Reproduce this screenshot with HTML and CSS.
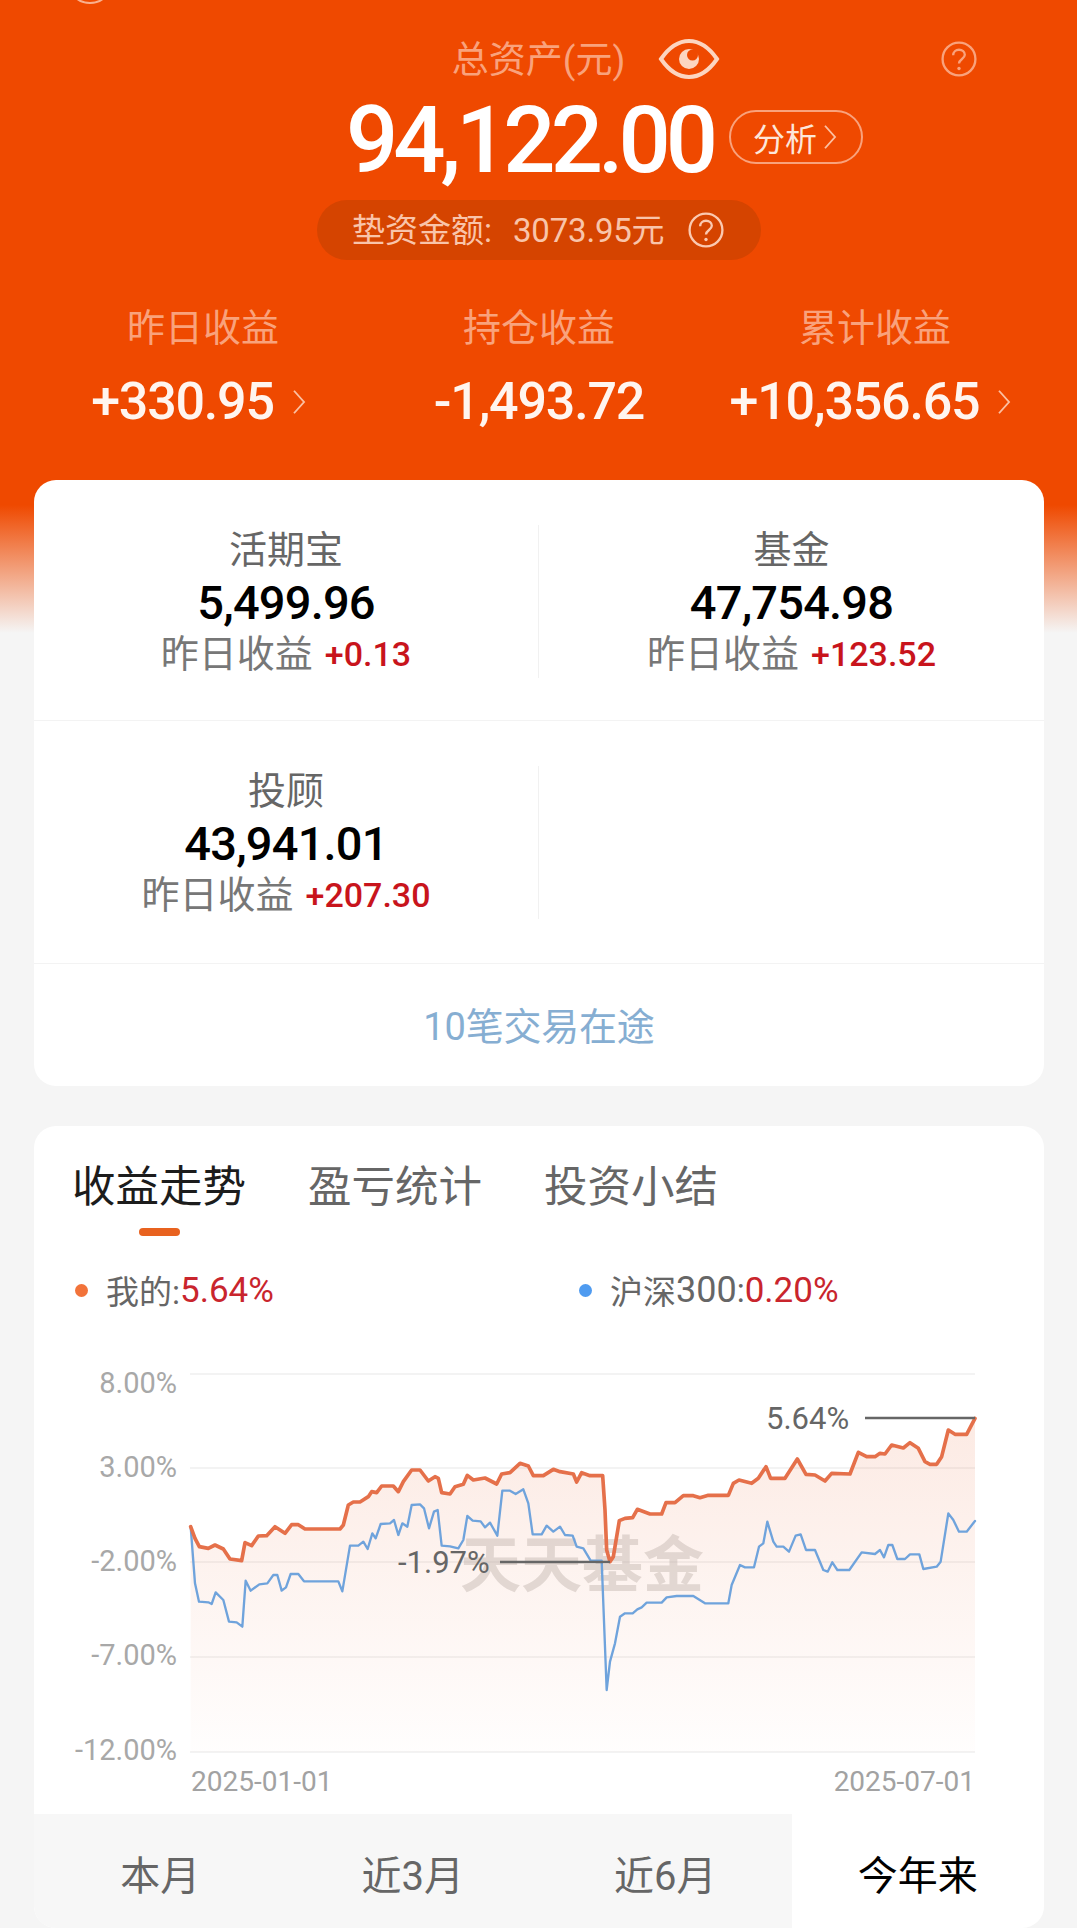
FILE: index.html
```html
<!DOCTYPE html>
<html lang="zh-CN">
<head>
<meta charset="utf-8">
<title>总资产</title>
<link rel="stylesheet" href="styles.css">
</head>
<body>
<div class="page">
  <header class="hero">
    <span class="corner-arc"></span>
    <div class="total-row">
      <span class="total-label">总资产(元)</span>
      <svg class="eye" viewBox="0 0 62 42"><path d="M3 21C12 8 21 3 31 3s19 5 28 18c-9 13-18 18-28 18S12 34 3 21Z"/><circle cx="31" cy="21" r="10"/><circle class="eye-glint" cx="34.500" cy="17" r="5.500"/></svg>
      <svg class="help help-top" viewBox="0 0 34 34"><circle cx="17" cy="17" r="15.500"/><path d="M11.500 13.500c0-3 2.400-5.200 5.500-5.200s5.500 2 5.500 4.800c0 3.800-5.500 4-5.500 8.200"/><circle class="dot" cx="17" cy="26" r="1.600"/></svg>
    </div>
    <div class="amount-row">
      <span class="amount">94,122.00</span>
      <span class="analyse">分析<svg class="chev" viewBox="0 0 12 24"><path d="M2 3l8 9-8 9"/></svg></span>
    </div>
    <div class="advance">
      <span>垫资金额:</span><span class="advance-num">3073.95元</span>
      <svg class="help" viewBox="0 0 34 34"><circle cx="17" cy="17" r="15.500"/><path d="M11.500 13.500c0-3 2.400-5.200 5.500-5.200s5.500 2 5.500 4.800c0 3.800-5.500 4-5.500 8.200"/><circle class="dot" cx="17" cy="26" r="1.600"/></svg>
    </div>
    <div class="stats">
      <div class="stat"><div class="stat-label">昨日收益</div><div class="stat-value">+330.95<svg class="chev" viewBox="0 0 12 24"><path d="M2 3l8 9-8 9"/></svg></div></div>
      <div class="stat"><div class="stat-label">持仓收益</div><div class="stat-value">-1,493.72</div></div>
      <div class="stat"><div class="stat-label">累计收益</div><div class="stat-value">+10,356.65<svg class="chev" viewBox="0 0 12 24"><path d="M2 3l8 9-8 9"/></svg></div></div>
    </div>
  </header>

  <section class="card holdings">
    <div class="hold-row">
      <div class="hold-cell"><div class="hold-name">活期宝</div><div class="hold-num">5,499.96</div><div class="hold-sub">昨日收益<em>+0.13</em></div></div>
      <div class="hold-cell"><div class="hold-name">基金</div><div class="hold-num">47,754.98</div><div class="hold-sub">昨日收益<em>+123.52</em></div></div>
    </div>
    <div class="hold-row">
      <div class="hold-cell"><div class="hold-name">投顾</div><div class="hold-num">43,941.01</div><div class="hold-sub">昨日收益<em>+207.30</em></div></div>
      <div class="hold-cell"></div>
    </div>
    <div class="transit">10笔交易在途</div>
  </section>

  <section class="card trend">
    <nav class="tabs">
      <span class="tab active">收益走势</span>
      <span class="tab">盈亏统计</span>
      <span class="tab">投资小结</span>
    </nav>
    <div class="legend">
      <div class="legend-item"><i class="dot-me"></i>我的:<b>5.64%</b></div>
      <div class="legend-item"><i class="dot-idx"></i>沪深<span class="idx-num">300</span>:<b>0.20%</b></div>
    </div>
    <svg class="chart" viewBox="34 1340 1010 474">
      <defs>
        <linearGradient id="area" x1="0" y1="0" x2="0" y2="1">
          <stop offset="0" stop-color="#ea6a3a" stop-opacity=".14"/>
          <stop offset="1" stop-color="#ea6a3a" stop-opacity=".01"/>
        </linearGradient>
      </defs>
      <g class="grid">
        <path d="M190 1374H975M190 1468H975M190 1562H975M190 1657H975M190 1752H975"/>
      </g>
      <g class="ylab">
        <text x="177" y="1393">8.00%</text>
        <text x="177" y="1477">3.00%</text>
        <text x="177" y="1571">-2.00%</text>
        <text x="177" y="1665">-7.00%</text>
        <text x="177" y="1760">-12.00%</text>
      </g>
      <g transform="translate(60 1350) scale(.33333)">
        <polygon fill="url(#area)" points="392,530 405,565 418,590 445,595 465,585 490,597 510,627 545,632 555,578 575,587 595,558 620,557 645,530 675,550 695,524 715,524 735,537 840,537 850,525 865,465 880,456 900,456 925,440 935,425 950,428 965,408 1000,408 1015,425 1030,395 1055,360 1080,360 1105,393 1125,380 1135,385 1145,428 1170,432 1185,410 1210,403 1222,376 1240,390 1275,384 1310,402 1325,372 1350,368 1380,340 1405,348 1420,377 1450,377 1480,358 1500,365 1540,372 1550,396 1565,368 1590,377 1628,377 1635,480 1640,600 1650,635 1660,620 1678,512 1695,505 1718,503 1732,478 1770,492 1805,492 1818,458 1845,458 1870,437 1900,437 1920,443 1945,436 2005,436 2020,400 2037,390 2075,400 2095,385 2118,350 2132,385 2175,385 2212,327 2238,373 2265,375 2295,393 2315,370 2370,372 2395,307 2420,320 2445,320 2460,310 2475,312 2495,285 2530,294 2550,278 2575,295 2595,335 2610,343 2630,343 2645,320 2665,240 2685,253 2720,253 2745,205 2745,1206 392,1206"/>
      </g>
      <text class="watermark" x="460" y="1587">天天基金</text>
      <g transform="translate(60 1350) scale(.33333)">
        <polyline class="line-idx" points="392,530 405,700 417,755 445,757 455,762 467,727 490,750 507,815 530,817 547,830 557,692 572,722 598,703 622,700 640,675 652,675 665,722 678,712 692,672 715,672 732,694 835,694 847,724 870,587 895,587 910,575 923,597 937,550 947,565 962,522 990,520 1002,510 1015,555 1027,520 1042,530 1055,465 1080,463 1092,475 1107,535 1122,485 1133,480 1145,587 1170,589 1195,595 1210,570 1222,498 1238,512 1262,514 1275,532 1290,518 1312,557 1327,422 1350,422 1367,432 1390,418 1405,460 1418,553 1445,553 1460,527 1480,545 1500,530 1515,555 1538,557 1550,590 1570,595 1592,632 1625,632 1640,1020 1650,935 1665,880 1680,800 1695,790 1718,790 1732,778 1745,772 1760,758 1805,758 1820,742 1850,738 1900,738 1935,760 2005,760 2015,705 2040,645 2055,652 2082,652 2097,590 2110,580 2122,515 2140,575 2150,590 2170,590 2187,605 2207,557 2222,553 2238,600 2265,600 2290,660 2303,665 2317,637 2332,660 2368,660 2405,607 2445,612 2460,600 2472,622 2485,585 2497,585 2512,627 2535,627 2550,613 2578,613 2590,657 2630,650 2642,635 2665,490 2680,510 2697,545 2720,545 2745,513"/>
        <polyline class="line-me" points="392,530 405,565 418,590 445,595 465,585 490,597 510,627 545,632 555,578 575,587 595,558 620,557 645,530 675,550 695,524 715,524 735,537 840,537 850,525 865,465 880,456 900,456 925,440 935,425 950,428 965,408 1000,408 1015,425 1030,395 1055,360 1080,360 1105,393 1125,380 1135,385 1145,428 1170,432 1185,410 1210,403 1222,376 1240,390 1275,384 1310,402 1325,372 1350,368 1380,340 1405,348 1420,377 1450,377 1480,358 1500,365 1540,372 1550,396 1565,368 1590,377 1628,377 1635,480 1640,600 1650,635 1660,620 1678,512 1695,505 1718,503 1732,478 1770,492 1805,492 1818,458 1845,458 1870,437 1900,437 1920,443 1945,436 2005,436 2020,400 2037,390 2075,400 2095,385 2118,350 2132,385 2175,385 2212,327 2238,373 2265,375 2295,393 2315,370 2370,372 2395,307 2420,320 2445,320 2460,310 2475,312 2495,285 2530,294 2550,278 2575,295 2595,335 2610,343 2630,343 2645,320 2665,240 2685,253 2720,253 2745,205"/>
      </g>
      <path class="marker" d="M500 1562H610M865 1418H975"/>
      <text class="mark-text" x="398" y="1573">-1.97%</text>
      <text class="mark-text" x="766" y="1429">5.64%</text>
      <g class="xlab">
        <text x="191" y="1791">2025-01-01</text>
        <text class="end" x="975" y="1791">2025-07-01</text>
      </g>
    </svg>
    <div class="ranges">
      <span class="range">本月</span>
      <span class="range">近3月</span>
      <span class="range">近6月</span>
      <span class="range active">今年来</span>
    </div>
  </section>
</div>
</body>
</html>
```
FILE: styles.css
```css
* { box-sizing: border-box; }
html, body { margin: 0; padding: 0; }
body {
  background: #f5f5f5;
  font-family: Roboto, "Noto Sans CJK SC", sans-serif;
}
.page { width: 1077px; height: 1928px; overflow: hidden; position: relative; }

.hero {
  position: relative;
  height: 633px;
  padding-top: 36px;
  background: linear-gradient(#ef4900 0, #ef4900 505px, #f5f5f5 633px);
  margin-bottom: -153px;
}
.corner-arc {
  position: absolute; left: 72px; top: -22px;
  width: 36px; height: 26px; border-radius: 50%;
  border: 2px solid #f9b08e;
}
.total-row { position: relative; display: flex; justify-content: center; align-items: center; height: 46px; }
.total-label { font-size: 37px; line-height: 42px; color: #f9a27c; margin-top: 3px; }
.eye { position: absolute; left: 658px; top: 2px; width: 62px; height: 42px; fill: none; stroke: #fcd5c0; stroke-width: 4; }
.eye circle { fill: #fcd5c0; stroke: none; }
.eye .eye-glint { fill: #ef4900; }
.help { width: 36px; height: 36px; fill: none; stroke: #fbc9b0; stroke-width: 2.200; }
.help .dot { fill: #fbc9b0; stroke: none; }
.help-top { position: absolute; left: 941px; top: 5px; stroke: #f9a27c; }
.help-top .dot { fill: #f9a27c; }

.amount-row { position: relative; display: flex; justify-content: center; margin-top: 8px; height: 102px; }
.amount { font-size: 92px; line-height: 102px; font-weight: 500; color: #fff; letter-spacing: -5px; margin-left: -18px; }
.analyse {
  position: absolute; left: 729px; top: 20px;
  width: 134px; height: 54px; border: 2px solid #f9a27c; border-radius: 27px;
  display: flex; align-items: center; padding-left: 22px; gap: 5px;
  font-size: 32px; color: #fde6da;
}
.chev { width: 16px; height: 30px; fill: none; stroke: #fbc0a2; stroke-width: 1.500; }

.advance {
  display: flex; align-items: center; gap: 21px;
  width: 444px; height: 60px; margin: 8px 0 0 317px; padding: 0 0 4px 35px;
  border-radius: 30px; background: #d54400;
  font-size: 33px; color: #f9c4aa;
}
.advance-num { margin-right: 3px; letter-spacing: -.2px; }
.advance .help { margin-top: 4px; }

.stats { display: grid; grid-template-columns: repeat(3, 336px); margin: 44px 0 0 35px; }
.stat { text-align: center; }
.stat-label { font-size: 38px; line-height: 48px; color: #f9a27c; }
.stat-value {
  display: flex; align-items: center; justify-content: center; gap: 17px;
  margin-top: 23px; font-size: 52px; line-height: 54px; font-weight: 500; color: #fff5ef; letter-spacing: -1.200px;
}
.stat-value .chev { margin-right: 8px; }

.card { position: relative; margin: 0 33px 0 34px; background: #fff; border-radius: 22px; }
.holdings { height: 606px; display: flex; flex-direction: column; }
.hold-row { display: grid; grid-template-columns: 1fr 1fr; height: 241px; border-bottom: 1px solid #f3f3f3; padding: 45px 0 0; }
.hold-row + .hold-row { height: 243px; }
.hold-cell { height: 153px; padding-top: 3px; text-align: center; }
.hold-cell:first-child { border-right: 1px solid #f1f1f1; }
.hold-name { font-size: 38px; line-height: 44px; color: #666; }
.hold-num { font-size: 47px; line-height: 58px; font-weight: 500; color: #000; letter-spacing: -.8px; margin-top: 2px; }
.hold-sub { font-size: 38px; line-height: 44px; color: #777; display: flex; justify-content: center; align-items: center; gap: 12px; margin-top: 0; }
.hold-sub em { font-style: normal; font-size: 34px; font-weight: 500; color: #c8141c; }
.transit { flex: 1; display: flex; align-items: center; justify-content: center; padding-bottom: 4px; font-size: 38px; color: #86aed2; letter-spacing: -.2px; }

.trend { margin-top: 40px; height: 802px; overflow: hidden; }
.tabs { display: flex; gap: 62px; padding: 36px 0 0 38px; height: 120px; }
.tab { position: relative; font-size: 43.500px; line-height: 52px; color: #666; height: 52px; }
.tab.active { color: #1c1c1c; }
.tab.active::after {
  content: ""; position: absolute; left: 67px; top: 66px;
  width: 41px; height: 8px; border-radius: 4px; background: #e8621f;
}
.legend { display: grid; grid-template-columns: 504px 1fr; padding: 22px 0 0 41px; height: 94px; }
.legend-item { display: flex; align-items: center; height: 44px; font-size: 33px; color: #666; }
.legend-item i { width: 13px; height: 13px; border-radius: 50%; margin-right: 18px; }
.legend-item b { font-weight: 400; font-size: 35px; color: #c9252d; }
.idx-num { font-size: 36px; }
.dot-me { background: #f2733a; }
.dot-idx { background: #4f9bf0; }

.chart { display: block; width: 1010px; height: 474px; }
.grid path { fill: none; stroke: #efefef; stroke-width: 1.500; }
.ylab text { font-size: 29px; fill: #a8a8a8; text-anchor: end; }
.xlab text { font-size: 28px; fill: #a2a2a2; }
.xlab .end { text-anchor: end; }
.watermark { font-size: 61px; font-weight: 700; fill: #b8aca6; fill-opacity: .4; }
.line-me, .line-idx { fill: none; stroke-linejoin: round; stroke-linecap: round; }
.line-me { stroke: #e5704a; stroke-width: 11; }
.line-idx { stroke: #6fa3dc; stroke-width: 7; }
.marker { fill: none; stroke: #666; stroke-width: 2.500; }
.mark-text { font-size: 31px; fill: #666; }

.ranges { display: grid; grid-template-columns: repeat(4, 1fr); height: 114px; background: #f7f7f7; }
.range { display: flex; align-items: center; justify-content: center; padding-top: 4px; font-size: 40px; color: #666; }
.range.active { background: #fff; color: #000; font-size: 40px; }
```
